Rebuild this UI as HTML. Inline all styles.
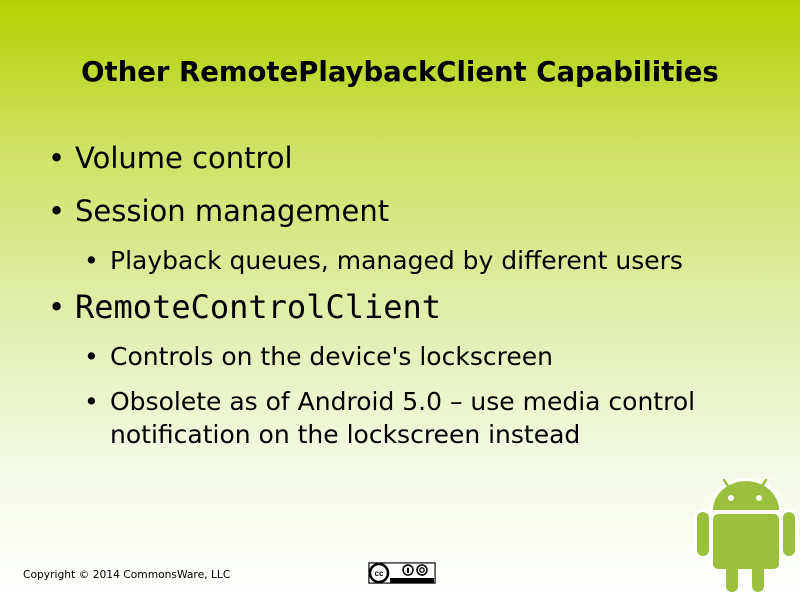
<!DOCTYPE html>
<html><head><style>
html,body{margin:0;padding:0}
body{width:800px;height:600px;position:relative;overflow:hidden;font-family:"DejaVu Sans","Liberation Sans",sans-serif;color:#000;
background:linear-gradient(to bottom,#b3d100 0%,#cfe265 25%,#e3efb3 55%,#f6faea 80%,#ffffff 100%);}
.t{position:absolute;white-space:nowrap;line-height:1}
h1{position:absolute;top:59px;left:0;width:800px;text-align:center;margin:0;font-size:27.5px;font-weight:bold;line-height:1}
.b{font-size:29px}
.s{font-size:25px}
</style></head><body>
<h1>Other RemotePlaybackClient Capabilities</h1>
<div class="t b" style="left:48px;top:144px">•</div><div class="t b" style="left:75px;top:144px">Volume control</div>
<div class="t b" style="left:48px;top:197px">•</div><div class="t b" style="left:75px;top:197px">Session management</div>
<div class="t s" style="left:84px;top:248px">•</div><div class="t s" style="left:110px;top:248px">Playback queues, managed by different users</div>
<div class="t b" style="left:48px;top:293px">•</div><div class="t b" style="left:75px;top:291px;font-family:'DejaVu Sans Mono','Liberation Mono',monospace;font-size:32px">RemoteControlClient</div>
<div class="t s" style="left:84px;top:344px">•</div><div class="t s" style="left:110px;top:344px">Controls on the device's lockscreen</div>
<div class="t s" style="left:84px;top:389px">•</div><div class="t s" style="left:110px;top:389px">Obsolete as of Android 5.0 – use media control</div>
<div class="t s" style="left:110px;top:422px">notification on the lockscreen instead</div>
<div class="t" style="left:23px;top:570px;font-size:10.7px">Copyright © 2014 CommonsWare, LLC</div>
<svg style="position:absolute;left:368px;top:562px" width="68" height="22" viewBox="0 0 68 22">
<rect x="0" y="0" width="68" height="22" fill="#aab2ab"/>
<rect x="1" y="1" width="66" height="20" fill="#fff" stroke="#000"/>
<rect x="22" y="16" width="44" height="5" fill="#000"/>
<circle cx="11" cy="11" r="9" fill="#fff" stroke="#000" stroke-width="2.5"/>
<text x="11" y="14" font-size="8" font-weight="bold" text-anchor="middle" font-family="Liberation Sans">cc</text>
<circle cx="40" cy="8" r="5" fill="#fff" stroke="#000" stroke-width="1.5"/>
<rect x="39" y="6" width="2" height="5" fill="#000"/>
<circle cx="54" cy="8" r="5" fill="#fff" stroke="#000" stroke-width="1.5"/>
<circle cx="54" cy="8" r="2.2" fill="none" stroke="#000" stroke-width="1.3"/>
</svg>
<svg style="position:absolute;left:690px;top:470px" width="110" height="130" viewBox="0 0 110 130">
<g stroke="#fff" stroke-width="6" stroke-linejoin="round" stroke-linecap="round" fill="#fff">
<line x1="34" y1="10" x2="42" y2="22"/><line x1="76" y1="10" x2="68" y2="22"/>
<path d="M23 40 A32 28 0 0 1 89 40 Z"/>
<rect x="23" y="44" width="66" height="55" rx="5"/>
<rect x="7" y="42" width="12" height="44" rx="6"/><rect x="93" y="42" width="12" height="44" rx="6"/>
<rect x="36" y="90" width="12" height="32" rx="6"/><rect x="62" y="90" width="12" height="32" rx="6"/>
</g>
<g fill="#9ac03e" stroke="#9ac03e">
<line x1="34" y1="10" x2="42" y2="22" stroke-width="2.5" stroke-linecap="round"/><line x1="76" y1="10" x2="68" y2="22" stroke-width="2.5" stroke-linecap="round"/>
<path stroke="none" d="M23 40 A32 28 0 0 1 89 40 Z"/>
<rect stroke="none" x="23" y="44" width="66" height="55" rx="5"/>
<rect stroke="none" x="7" y="42" width="12" height="44" rx="6"/><rect stroke="none" x="93" y="42" width="12" height="44" rx="6"/>
<rect stroke="none" x="36" y="90" width="12" height="32" rx="6"/><rect stroke="none" x="62" y="90" width="12" height="32" rx="6"/>
</g>
<circle cx="41" cy="28" r="3" fill="#fff"/><circle cx="69" cy="28" r="3" fill="#fff"/>
</svg>
</body></html>
